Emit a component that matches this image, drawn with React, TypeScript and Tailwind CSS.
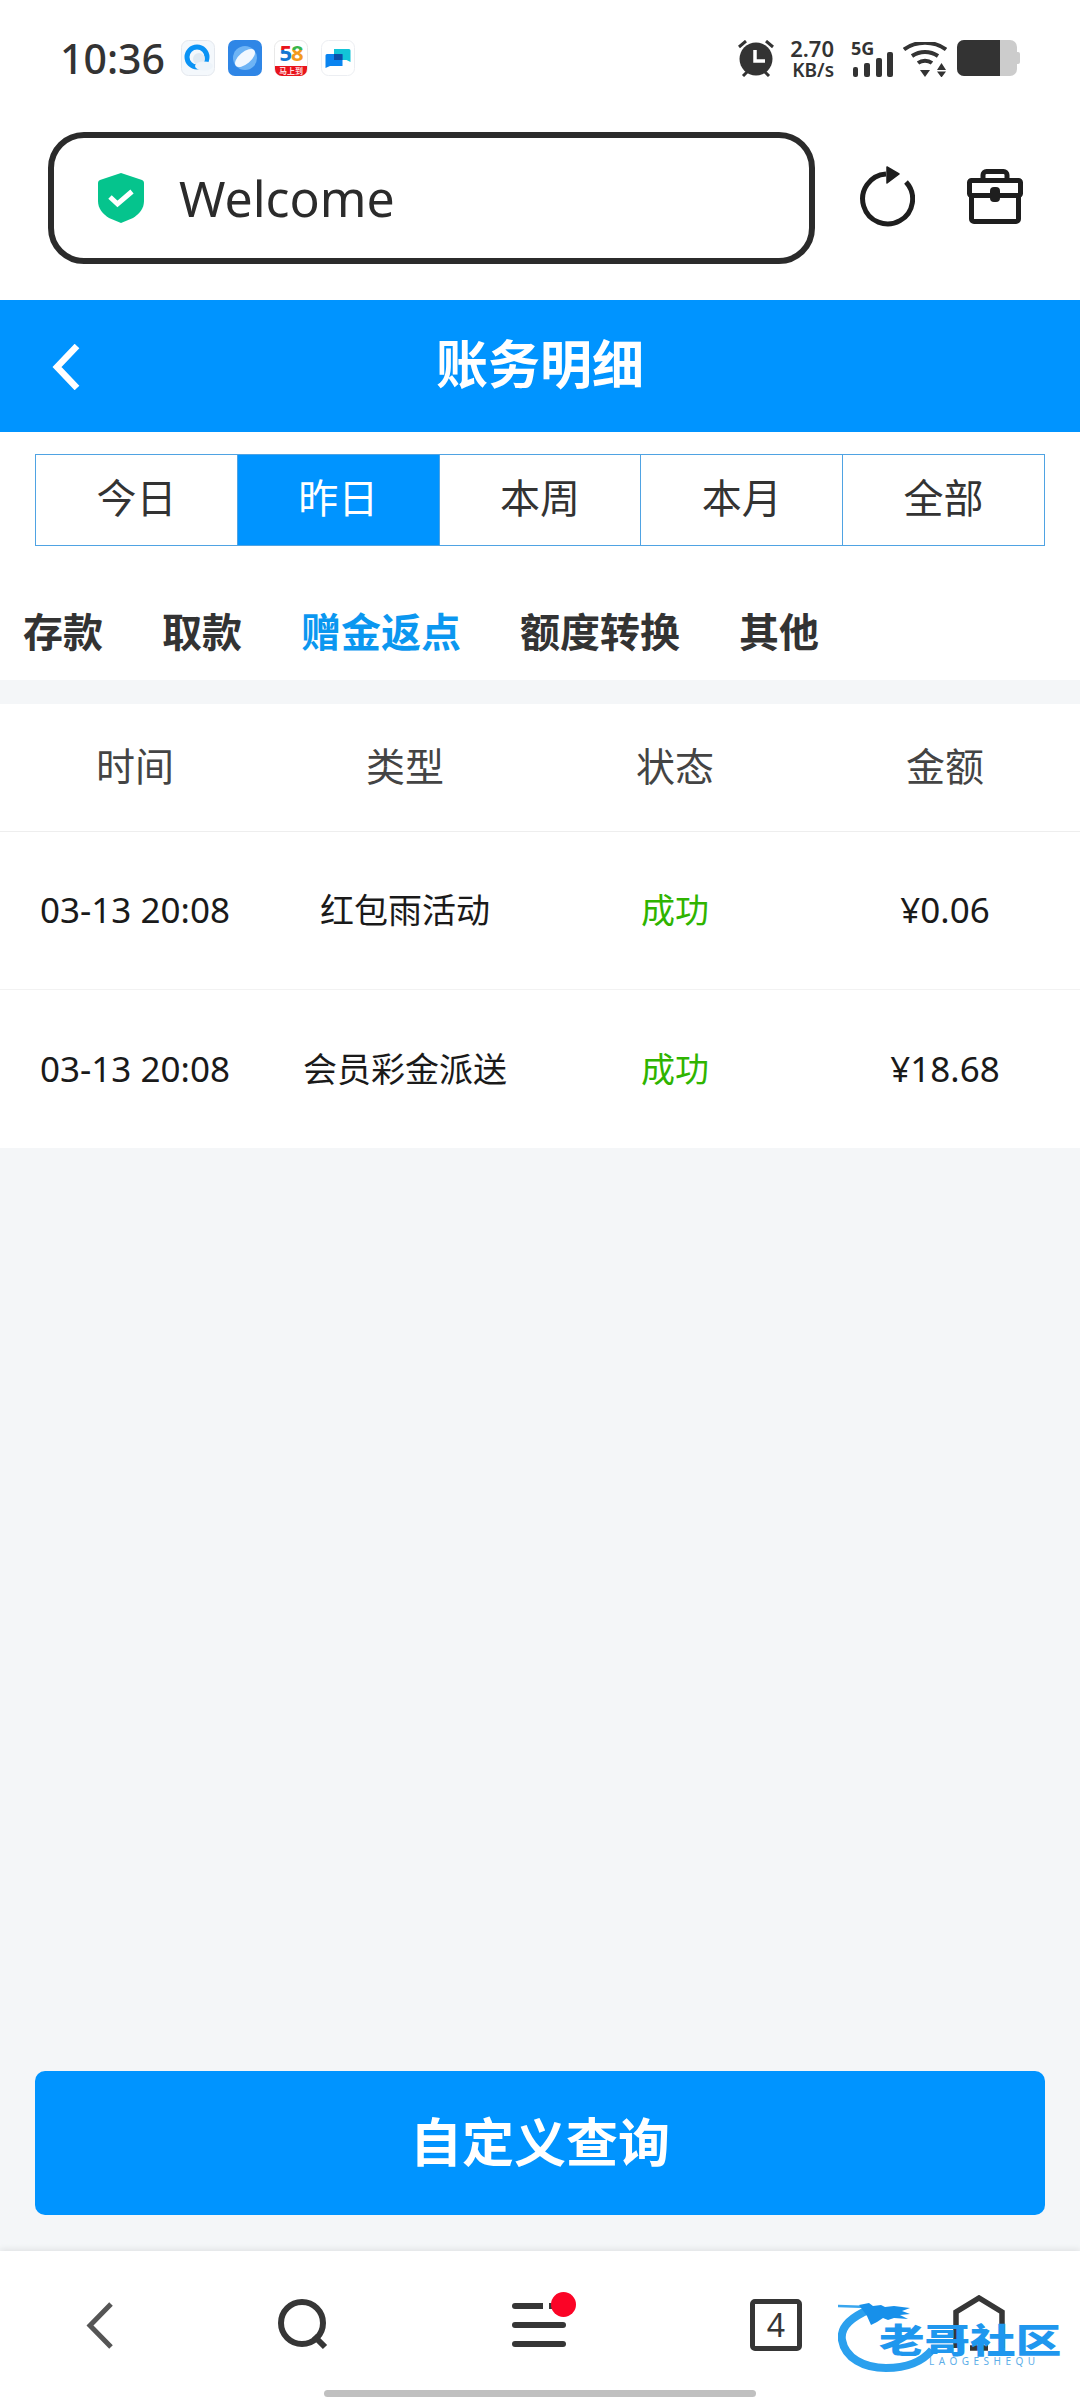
const font = { fontFamily: '"Noto Sans", "Noto Sans CJK SC", sans-serif' }

const ranges = ['今日', '昨日', '本周', '本月', '全部']
const kinds = ['存款', '取款', '赠金返点', '额度转换', '其他']
const rows = [
  { time: '03-13 20:08', type: '红包雨活动', status: '成功', amount: '¥0.06' },
  { time: '03-13 20:08', type: '会员彩金派送', status: '成功', amount: '¥18.68' },
]

function Cell({ children, className = '' }: { children: React.ReactNode; className?: string }) {
  return <div className={`flex-1 text-center ${className}`}>{children}</div>
}

function StatusBar() {
  return (
    <div className="h-[100px] flex items-start justify-between pl-[60px] pr-[60px] pt-[40px] text-[#333]">
      <div className="flex items-start">
        <span className="text-[41px] leading-[36px] font-medium w-[121px]">10:36</span>
        <div className="flex gap-[12.5px]">
          <svg width="34" height="36" viewBox="0 0 34 36">
            <rect x="0.5" y="0.5" width="33" height="35" rx="7" fill="#f4f8fc" stroke="#e4e8ee" />
            <circle cx="16" cy="17" r="10" fill="none" stroke="#0a93f5" strokeWidth="5" />
            <circle cx="18" cy="19" r="6" fill="#dfe9f2" />
            <ellipse cx="23" cy="26" rx="9" ry="4.500" fill="#eef4fa" />
          </svg>
          <svg width="34" height="36" viewBox="0 0 34 36">
            <rect width="34" height="36" rx="7" fill="#2f86e6" />
            <circle cx="17" cy="18" r="12" fill="#6eb4f5" />
            <ellipse cx="17" cy="18" rx="12" ry="6" transform="rotate(-40 17 18)" fill="#f2f8ff" />
          </svg>
          <svg width="34" height="36" viewBox="0 0 34 36">
            <defs>
              <linearGradient id="five" x1="0" y1="0" x2="0" y2="1">
                <stop offset="0.45" stopColor="#e8141c" />
                <stop offset="0.45" stopColor="#1677d2" />
              </linearGradient>
              <linearGradient id="eight" x1="0" y1="0" x2="0" y2="1">
                <stop offset="0.45" stopColor="#3ab54a" />
                <stop offset="0.45" stopColor="#f39a1e" />
              </linearGradient>
            </defs>
            <rect x="0.5" y="0.5" width="33" height="35" rx="7" fill="#fff" stroke="#e8e8e8" />
            <text x="17" y="21" fontSize="22" fontWeight="700" textAnchor="middle" letterSpacing="-1">
              <tspan fill="url(#five)">5</tspan>
              <tspan fill="url(#eight)">8</tspan>
            </text>
            <path d="M1 26h32v3a7 7 0 0 1-7 7H8a7 7 0 0 1-7-7z" fill="#e8141c" />
            <text x="17" y="33.500" fontSize="8" fontWeight="700" textAnchor="middle" fill="#ffd9dc">马上到</text>
          </svg>
          <svg width="34" height="36" viewBox="0 0 34 36">
            <rect x="0.5" y="0.5" width="33" height="35" rx="7" fill="#fff" stroke="#eceef2" />
            <path d="M13 9h15a1.500 1.500 0 0 1 1.500 1.500V22l-4-2H13z" fill="#12c4d8" />
            <path d="M6 14h14a1.500 1.500 0 0 1 1.500 1.500V26H9l-4.500 2V15.500A1.500 1.500 0 0 1 6 14z" fill="#0a84f0" />
            <rect x="13" y="14" width="8.500" height="6" fill="#0b4fa8" />
          </svg>
        </div>
      </div>
      <div className="flex items-start">
        <svg width="38" height="37" viewBox="0 0 38 37" fill="#333">
          <circle cx="18" cy="19" r="16.500" />
          <path d="M1 7l7-6M35 7l-7-6M5 36l4-4M31 36l-4-4" stroke="#333" strokeWidth="3" fill="none" />
          <path d="M17 10v11h10" fill="none" stroke="#fff" strokeWidth="3.500" />
        </svg>
        <div className="w-[44px] ml-[14px] -mt-[4px] flex flex-col items-end font-semibold">
          <span className="text-[22px] leading-[24px]">2.70</span>
          <span className="text-[19px] leading-[20px]">KB/s</span>
        </div>
        <div className="relative w-[42px] h-[38px] ml-[17px]">
          <span className="absolute left-0 -top-[1px] text-[18px] leading-[18px] font-bold">5G</span>
          <svg width="42" height="38" viewBox="0 0 42 38" fill="#333">
            <rect x="2" y="27" width="5" height="10" rx="2" />
            <rect x="13" y="23" width="6" height="14" rx="2" />
            <rect x="25" y="18" width="6" height="19" rx="2" />
            <rect x="36" y="12" width="6" height="25" rx="2" />
          </svg>
        </div>
        <svg width="44" height="35" viewBox="0 0 44 35" className="ml-[10px] mt-[2px]">
          <path d="M1 7.500c12-9 30-9 42 0M9 14c8-5.500 18-5.500 26 0M15 21c4-3 10-3 14 0" fill="none" stroke="#333" strokeWidth="4" />
          <path d="M17 28h10l-5 7z" fill="#333" />
          <path d="M34 28l4.500-7 4.500 7zM34 29.500l4.500 6 4.500-6z" fill="#333" />
        </svg>
        <div className="flex items-center ml-[10px]">
          <div className="w-[60px] h-[36px] flex rounded-[7px] overflow-hidden bg-[#ccc]">
            <div className="w-[43px] bg-[#333]" />
          </div>
          <div className="w-[3px] h-[12px] bg-[#ccc] rounded-r-[2px]" />
        </div>
      </div>
    </div>
  )
}

function BrowserBar() {
  return (
    <div className="h-[200px] flex items-start pl-[48px] pt-[32px]">
      <div className="w-[767px] h-[132px] border-[6px] border-[#2b2b2b] rounded-[36px] flex items-center pl-[44px]">
        <svg width="46" height="50" viewBox="0 0 46 50">
          <path d="M23 0l21 7c1 .4 2 1.500 2 3v18c0 8-5 13-11 17l-12 5-12-5C5 41 0 36 0 28V10c0-1.500 1-2.600 2-3z" fill="#05c48d" />
          <path d="M12 24l7.500 7L34 18.500" fill="none" stroke="#fff" strokeWidth="5" />
        </svg>
        <span className="ml-[35px] text-[50px] leading-[60px] text-[#2b2b2b]">Welcome</span>
      </div>
      <svg width="56" height="62" viewBox="0 0 56 62" className="ml-[44px] mt-[34px]" fill="none">
        <path d="M47 16A25 25 0 1 1 27 8" stroke="#1e1e1e" strokeWidth="5" />
        <path d="M28 1l12 7-12 9z" fill="#1e1e1e" stroke="#1e1e1e" strokeWidth="1.500" strokeLinejoin="round" />
      </svg>
      <svg width="56" height="55" viewBox="0 0 56 55" className="ml-[52px] mt-[37px]" fill="none" stroke="#1e1e1e" strokeWidth="5">
        <path d="M16 10V6a3.500 3.500 0 0 1 3.500-3.500h17A3.500 3.500 0 0 1 40 6v4" />
        <rect x="2.500" y="11.500" width="51" height="15" rx="2" />
        <path d="M4.500 26v24a2.500 2.500 0 0 0 2.500 2.500h42a2.500 2.500 0 0 0 2.500-2.500V26" />
        <rect x="23" y="18" width="10" height="15" rx="4" fill="#1e1e1e" stroke="none" />
      </svg>
    </div>
  )
}

function BottomNav() {
  return (
    <div className="relative h-[149px] bg-white shadow-[0_-2px_6px_rgba(0,0,0,0.08)]">
      <div className="h-[149px] flex items-start text-[#363636]">
        <svg width="27" height="47" viewBox="0 0 27 47" className="ml-[86px] mt-[51px]" fill="none" stroke="#555" strokeWidth="5">
          <path d="M25 2L4 23.500 25 45" />
        </svg>
        <svg width="50" height="51" viewBox="0 0 50 51" className="ml-[165px] mt-[48px]" fill="none" stroke="#363636" strokeWidth="6">
          <circle cx="24" cy="24" r="21" />
          <path d="M36 37l11 11" />
        </svg>
        <div className="relative ml-[184px] mt-[52px] w-[54px] flex flex-col gap-[13px]">
          <div className="h-[6px] bg-[#363636] rounded-full" />
          <div className="h-[6px] bg-[#363636] rounded-full" />
          <div className="h-[6px] bg-[#363636] rounded-full" />
          <div className="absolute left-[31px] top-0 w-[6px] h-[6px] bg-white" />
          <div className="absolute -right-[10px] -top-[11px] w-[25px] h-[25px] rounded-full bg-[#fb0426]" />
        </div>
        <div className="ml-[184px] mt-[48px] w-[52px] h-[52px] border-[5.5px] border-[#363636] rounded-[5px] flex items-center justify-center text-[32px] leading-none">
          4
        </div>
        <svg width="52" height="56" viewBox="0 0 52 56" className="ml-[151px] mt-[44px]" fill="none" stroke="#363636" strokeWidth="5.500">
          <path d="M3 53V17L26 3l23 14v36" />
          <path d="M17 53h18" />
        </svg>
      </div>
      {/* watermark sits on top of the home icon */}
      <div className="absolute left-[838px] top-[47px] w-[224px] h-[74px]">
        <svg width="224" height="74" viewBox="0 0 224 74" className="absolute inset-0" fill="none">
          <path d="M30 12C12 20 2 30 4 42c3 18 22 28 44 28 20 0 36-6 46-18" stroke="#2ba0ee" strokeWidth="8" />
          <path d="M0 8l30 1" stroke="#3aa6ee" strokeWidth="2.500" />
          <path d="M21 7l10-2 4 3 8-1 4 2 9-1 16 2-8 3 8 3-10 1 8 4-14-1-6 2-5-2-6 4-6 3-4-9z" fill="#1790ea" />
        </svg>
        <span className="absolute left-[41px] top-[27px] text-[34px] leading-[30px] font-black text-[#1f97ee] whitespace-nowrap scale-x-[1.34] origin-left">老哥社区</span>
        <span className="absolute left-[91px] top-[59px] text-[10px] leading-[8px] text-[#5eaee8] tracking-[4.500px]">LAOGESHEQU</span>
      </div>
      <div className="absolute left-[324px] top-[139px] w-[432px] h-[7px] rounded-full bg-[#c0c0c0]" />
    </div>
  )
}

export default function App() {
  return (
    <div className="w-[1080px] h-[2400px] flex flex-col bg-[#f4f6f8] overflow-hidden" style={font}>
      <div className="bg-white">
        <StatusBar />
        <BrowserBar />
      </div>

      <div className="h-[132px] bg-[#0094ff] flex items-center relative shrink-0">
        <svg width="28" height="46" viewBox="0 0 28 46" className="absolute left-[52px] top-[44px]" fill="none" stroke="#fff" strokeWidth="6.500">
          <path d="M25 2L5 23l20 21" />
        </svg>
        <h1 className="w-full text-center text-[52px] leading-[60px] font-bold text-white pb-[4px]">账务明细</h1>
      </div>

      <div className="bg-white h-[248px] shrink-0 pt-[22px]">
        <div className="mx-[35px] h-[92px] flex border border-[#4fa3e3] text-[40px] text-[#333]">
          {ranges.map((r, i) => (
            <div
              key={r}
              className={`flex-1 flex items-center justify-center pb-[5px] ${i > 0 ? 'border-l border-[#4fa3e3]' : ''} ${i === 1 ? 'bg-[#0094ff] text-white' : ''}`}
            >
              {r}
            </div>
          ))}
        </div>
        <div className="flex gap-[59px] pl-[23px] mt-[61px] text-[40px] leading-[50px] font-bold text-[#333]">
          {kinds.map((k, i) => (
            <span key={k} className={i === 2 ? 'text-[#0b97f0]' : ''}>{k}</span>
          ))}
        </div>
      </div>

      <div className="mt-[24px] bg-white shrink-0">
        <div className="h-[128px] flex items-center border-b border-[#eeeeee] text-[39px] text-[#444] pb-[2px]">
          <Cell>时间</Cell>
          <Cell>类型</Cell>
          <Cell>状态</Cell>
          <Cell>金额</Cell>
        </div>
        {rows.map((row, i) => (
          <div key={i} className={`h-[158px] flex items-center text-[34px] text-[#1a1a1a] ${i === 0 ? 'border-b border-[#f2f2f2]' : ''}`}>
            <Cell className="text-[35px]">{row.time}</Cell>
            <Cell>{row.type}</Cell>
            <Cell className="text-[#2fb400]">{row.status}</Cell>
            <Cell className="text-[35px]">{row.amount}</Cell>
          </div>
        ))}
      </div>

      <div className="flex-1 flex flex-col justify-end">
        <button className="mx-[35px] mb-[36px] h-[144px] rounded-[10px] bg-[#0094ff] text-white text-[52px] font-bold pb-[2px]">自定义查询</button>
      </div>

      <BottomNav />
    </div>
  )
}
